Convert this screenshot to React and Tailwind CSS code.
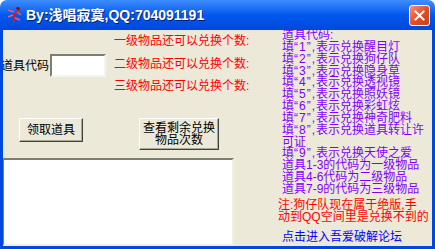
const cjk = { fontFamily: '"Liberation Sans", "Noto Sans CJK SC", sans-serif' };

function TitleIcon() {
  return (
    <svg width="18" height="18" viewBox="0 0 18 18" className="shrink-0">
      <path d="M11 2 l3 1 l-2 3 l-4 3 l2 3 l-2 4" stroke="#c0203a" strokeWidth="2" fill="none" />
      <path d="M8 9 l-5 2 M9 6 l-6 -2 M12 6 l4 3 M10 12 l5 2" stroke="#e0607a" strokeWidth="1.5" fill="none" />
      <circle cx="13" cy="2.5" r="1.6" fill="#7a1020" />
    </svg>
  );
}

function CloseButton() {
  return (
    <div className="w-[21px] h-[21px] rounded-[3px] border border-white bg-gradient-to-br from-[#f0907a] via-[#e0502c] to-[#c8401c] flex items-center justify-center">
      <svg width="11" height="11" viewBox="0 0 11 11">
        <path d="M1.5 1.5 L9.5 9.5 M9.5 1.5 L1.5 9.5" stroke="white" strokeWidth="2" strokeLinecap="square" />
      </svg>
    </div>
  );
}

function Btn({ children, className = "" }) {
  return (
    <button
      className={`bg-[#ece9d8] border border-t-white border-l-white border-b-[#404040] border-r-[#404040] shadow-[inset_-1px_-1px_0_#aca899] text-[12px] leading-[12px] text-black ${className}`}
      style={cjk}
    >
      {children}
    </button>
  );
}

function Fill({ n, rest }) {
  return (
    <span>
      填<span className="tracking-[1px]">“{n}”,</span>
      {rest}
    </span>
  );
}

export default function App() {
  const items = [
    ["1", "表示兑换醒目灯"],
    ["2", "表示兑换狗仔队"],
    ["3", "表示兑换隐身草"],
    ["4", "表示兑换透视镜"],
    ["5", "表示兑换照妖镜"],
    ["6", "表示兑换彩虹炫"],
    ["7", "表示兑换神奇肥料"],
    ["8", "表示兑换道具转让许"],
  ];

  return (
    <div className="w-[435px] h-[249px] flex flex-col overflow-hidden" style={cjk}>
      <div className="h-[30px] shrink-0 rounded-t-[7px] bg-gradient-to-b from-[#3d8dff] via-[#0058ee] to-[#0048dc] flex items-center pl-[5px] pr-[5px]">
        <TitleIcon />
        <span className="ml-[3px] text-white font-bold text-[14px] [text-shadow:1px_1px_0_#0a1e6e]">
          By:浅唱寂寞,QQ:704091191
        </span>
        <div className="ml-auto">
          <CloseButton />
        </div>
      </div>

      <div className="flex-1 flex bg-[#0047e0] px-[3px] pb-[3px]">
        <div className="flex-1 flex bg-[#ece9d8] overflow-hidden">
          <div className="w-[277px] shrink-0 flex flex-col">
            <div className="flex items-start h-[88px]">
              <div className="flex items-center mt-[24px] -ml-[2px]">
                <span className="text-[12px] text-black w-[49px]">道具代码</span>
                <div className="w-[56px] h-[23px] bg-white border-2 border-t-[#7f7d70] border-l-[#7f7d70] border-b-[#f5f4ee] border-r-[#f5f4ee]" />
              </div>
              <div className="ml-[8px] -mt-px flex flex-col text-[12px] leading-[24px] text-[#ff0000] whitespace-nowrap">
                <span>一级物品还可以兑换个数:</span>
                <span className="-mt-px">二级物品还可以兑换个数:</span>
                <span className="-mt-[2px]">三级物品还可以兑换个数:</span>
              </div>
            </div>
            <div className="flex items-start">
              <Btn className="ml-[16px] w-[64px] h-[24px]">领取道具</Btn>
              <Btn className="ml-[56px] w-[80px] h-[32px] flex flex-col items-center justify-center">
                <span>查看剩余兑换</span>
                <span>物品次数</span>
              </Btn>
            </div>
            <div className="mt-[8px] -ml-px w-[232px] flex-1 bg-white border-2 border-t-[#7f7d70] border-l-[#7f7d70] border-b-[#f1efe2] border-r-[#f1efe2]" />
          </div>

          <div className="flex-1 flex flex-col pl-[2px] text-[12px] whitespace-nowrap">
            <div className="flex flex-col leading-[11.85px] text-[#8000ff]">
              <span>道具代码:</span>
              {items.map(([n, rest]) => (
                <Fill key={n} n={n} rest={rest} />
              ))}
              <span>可证</span>
              <Fill n="9" rest="表示兑换天使之爱" />
              <span>道具1-3的代码为一级物品</span>
              <span>道具4-6代码为二级物品</span>
              <span>道具7-9的代码为三级物品</span>
            </div>
            <div className="mt-[4px] -ml-[4px] flex flex-col leading-[11.7px] text-[#ff0000]">
              <span>注:狗仔队现在属于绝版,手</span>
              <span>动到QQ空间里是兑换不到的</span>
            </div>
            <div className="mt-[8px] leading-[12px] text-[#0000ff]">点击进入吾爱破解论坛</div>
          </div>
        </div>
      </div>
    </div>
  );
}
